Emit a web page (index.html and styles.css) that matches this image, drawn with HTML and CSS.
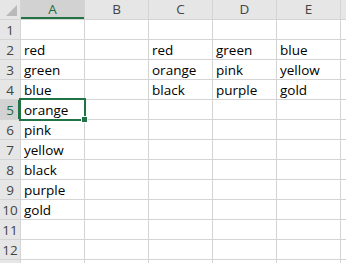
FILE: index.html
```html
<!DOCTYPE html>
<html lang="en">
<head>
  <meta charset="UTF-8">
  <title>Sheet1</title>
  <link rel="stylesheet" href="styles.css">
</head>
<body>
  <div class="sheet">
    <div class="corner"><span class="tri"></span></div>
    <div class="col-head active">A</div>
    <div class="col-head">B</div>
    <div class="col-head">C</div>
    <div class="col-head">D</div>
    <div class="col-head">E</div>
    <div class="col-head"></div>

    <div class="row-head">1</div>
    <div class="cell"></div><div class="cell"></div><div class="cell"></div><div class="cell"></div><div class="cell"></div><div class="cell"></div>

    <div class="row-head">2</div>
    <div class="cell">red</div><div class="cell"></div><div class="cell">red</div><div class="cell">green</div><div class="cell">blue</div><div class="cell"></div>

    <div class="row-head">3</div>
    <div class="cell">green</div><div class="cell"></div><div class="cell">orange</div><div class="cell">pink</div><div class="cell">yellow</div><div class="cell"></div>

    <div class="row-head">4</div>
    <div class="cell">blue</div><div class="cell"></div><div class="cell">black</div><div class="cell">purple</div><div class="cell">gold</div><div class="cell"></div>

    <div class="row-head active">5</div>
    <div class="cell selected">orange</div><div class="cell"></div><div class="cell"></div><div class="cell"></div><div class="cell"></div><div class="cell"></div>

    <div class="row-head">6</div>
    <div class="cell">pink</div><div class="cell"></div><div class="cell"></div><div class="cell"></div><div class="cell"></div><div class="cell"></div>

    <div class="row-head">7</div>
    <div class="cell">yellow</div><div class="cell"></div><div class="cell"></div><div class="cell"></div><div class="cell"></div><div class="cell"></div>

    <div class="row-head">8</div>
    <div class="cell">black</div><div class="cell"></div><div class="cell"></div><div class="cell"></div><div class="cell"></div><div class="cell"></div>

    <div class="row-head">9</div>
    <div class="cell">purple</div><div class="cell"></div><div class="cell"></div><div class="cell"></div><div class="cell"></div><div class="cell"></div>

    <div class="row-head">10</div>
    <div class="cell">gold</div><div class="cell"></div><div class="cell"></div><div class="cell"></div><div class="cell"></div><div class="cell"></div>

    <div class="row-head">11</div>
    <div class="cell"></div><div class="cell"></div><div class="cell"></div><div class="cell"></div><div class="cell"></div><div class="cell"></div>

    <div class="row-head">12</div>
    <div class="cell"></div><div class="cell"></div><div class="cell"></div><div class="cell"></div><div class="cell"></div><div class="cell"></div>

    <div class="row-head"></div>
    <div class="cell"></div><div class="cell"></div><div class="cell"></div><div class="cell"></div><div class="cell"></div><div class="cell"></div>
  </div>
</body>
</html>
```

FILE: styles.css
```css
html, body {
  margin: 0;
  padding: 0;
  background: #fff;
  overflow: hidden;
}

.sheet {
  display: grid;
  grid-template-columns: 20px repeat(6, 63px);
  grid-template-rows: 19px repeat(13, 19px);
  gap: 1px;
  background: #d4d4d4;
  width: 400px;
  font-family: 'Open Sans', 'Liberation Sans', sans-serif;
  font-size: 13.5px;
  color: #000;
}

.corner {
  background: #e6e6e6;
  position: relative;
}

.corner .tri {
  position: absolute;
  right: 3px;
  bottom: 3px;
  width: 11px;
  height: 11px;
  background: #b9b9b9;
  clip-path: polygon(100% 0, 100% 100%, 0 100%);
}

.col-head {
  background: #e6e6e6;
  color: #444;
  text-align: center;
  line-height: 19px;
  font-size: 13.5px;
}

.col-head.active {
  background: #d2d2d2;
  color: #1e6b41;
  box-shadow: inset 0 -2px 0 #217346;
}

.row-head {
  background: #e6e6e6;
  color: #444;
  text-align: center;
  line-height: 20px;
  font-size: 13.5px;
}

.row-head.active {
  background: #d2d2d2;
  color: #1e6b41;
  box-shadow: inset -2px 0 0 #217346;
}

.cell {
  background: #fff;
  padding: 0 3px;
  line-height: 20px;
  white-space: nowrap;
  overflow: hidden;
}

.cell.selected {
  position: relative;
  overflow: visible;
  outline: 2px solid #217346;
  z-index: 1;
}

.cell.selected::after {
  content: '';
  position: absolute;
  right: -4px;
  bottom: -4px;
  width: 5px;
  height: 5px;
  background: #217346;
  border: 1px solid #fff;
}
```
